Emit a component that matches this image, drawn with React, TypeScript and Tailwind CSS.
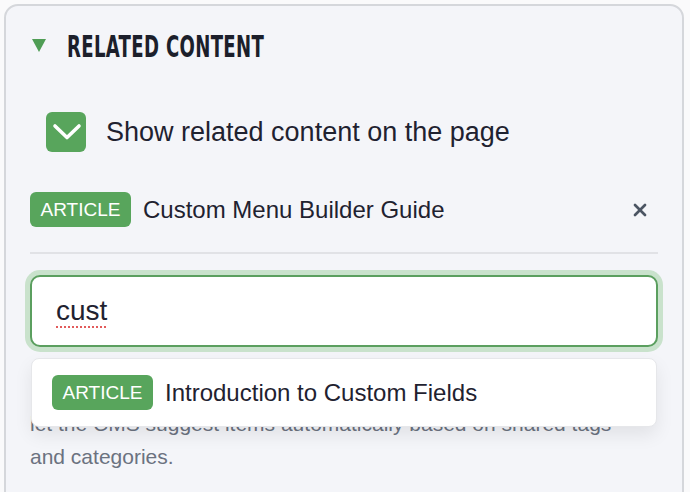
import { X } from 'lucide-react';

const sans = { fontFamily: '"Liberation Sans", Arial, sans-serif' };

function Badge() {
    return (
        <span className="inline-flex h-[35px] w-[101px] shrink-0 items-center justify-center rounded-[6px] bg-[#58a55c] text-[19px] leading-none text-white">
            ARTICLE
        </span>
    );
}

export default function App() {
    return (
        <div className="h-[492px] w-[690px] overflow-hidden bg-[#fafafb] pl-[4px] pt-[4px]" style={sans}>
            <div className="h-[520px] w-[680px] rounded-t-[14px] border-2 border-[#d5d7db] bg-[#f4f5f9] px-[24px] pt-[26px]">
                <div className="flex h-[30px] items-center pl-[2px]">
                    <svg width="14" height="13" viewBox="0 0 14 13" className="mt-[-3px]">
                        <path d="M0 0 H14 L7 13 Z" fill="#4f9d55" />
                    </svg>
                    <h2
                        className="ml-[21px] origin-left scale-x-[0.67] text-[30px] font-bold uppercase leading-none tracking-[0.5px] text-[#1c1f2b]"
                        style={{ fontFamily: '"Liberation Sans Narrow", "DejaVu Sans Condensed", "Liberation Sans", sans-serif' }}
                    >
                        Related Content
                    </h2>
                </div>

                <label className="mt-[50px] flex h-[40px] items-center pl-[16px]">
                    <span className="flex h-[40px] w-[40px] items-center justify-center rounded-[6px] bg-[#58a55c]">
                        <svg width="40" height="40" viewBox="0 0 40 40">
                            <path d="M9 14 L21 25.5 L33 14" fill="none" stroke="white" strokeWidth="3.6" strokeLinecap="round" strokeLinejoin="round" />
                        </svg>
                    </span>
                    <span className="ml-[20px] text-[27px] text-[#1f2230]">Show related content on the page</span>
                </label>

                <div className="mt-[40px] flex h-[35px] items-center">
                    <Badge />
                    <span className="ml-[12px] text-[24px] text-[#1f2230]">Custom Menu Builder Guide</span>
                    <button className="ml-auto mr-[8px] text-[#4b5563]">
                        <X size={20} strokeWidth={3.2} />
                    </button>
                </div>

                <div className="mt-[25px] h-[2px] bg-[#e1e2e6]" />

                <div className="relative mt-[21px]">
                    <div className="flex h-[72px] items-center rounded-[10px] border-2 border-[#5b9f5f] bg-white px-[24px] shadow-[0_0_0_5px_#c9e2cc]">
                        <span className="text-[28px] text-[#1f2230] underline decoration-[#e25b5b] decoration-dotted decoration-[2px] underline-offset-[6px]">
                            cust
                        </span>
                    </div>
                    <div className="absolute left-[1px] right-[1px] top-[83px] z-10 flex h-[69px] items-center rounded-[8px] border border-[#e6e7ea] bg-white pl-[20px] shadow-[0_8px_18px_rgba(0,0,0,0.08)]">
                        <Badge />
                        <span className="ml-[12px] text-[24px] text-[#1f2230]">Introduction to Custom Fields</span>
                    </div>
                </div>

                <p className="mt-[60px] text-[21px] leading-[33px] text-[#6b7280]">
                    let the CMS suggest items automatically based on shared tags
                    <br />
                    and categories.
                </p>
            </div>
        </div>
    );
}
